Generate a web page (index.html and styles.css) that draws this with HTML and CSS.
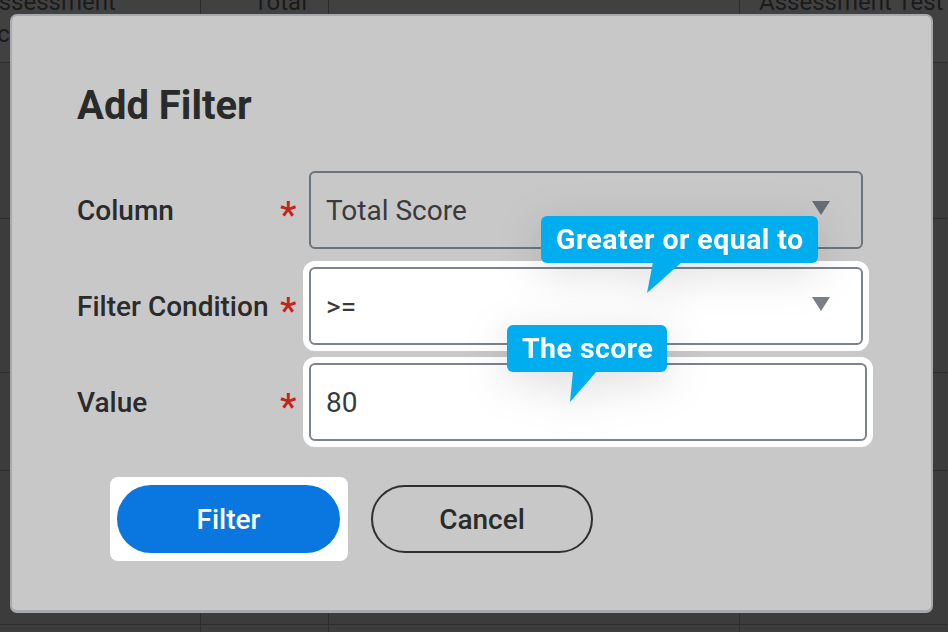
FILE: index.html
```html
<!DOCTYPE html>
<html lang="en">
<head>
<meta charset="utf-8">
<title>Add Filter</title>
<link rel="stylesheet" href="styles.css">
</head>
<body>
<div class="table">
  <div class="row head">
    <div class="cell c1"><span class="cut">Assessment Score</span></div>
    <div class="cell c2">Total</div>
    <div class="cell c3"></div>
    <div class="cell c4">Assessment Test</div>
  </div>
  <div class="row r1"><div class="cell"></div><div class="cell"></div><div class="cell"></div><div class="cell"></div></div>
  <div class="row r2"><div class="cell"></div><div class="cell"></div><div class="cell"></div><div class="cell"></div></div>
  <div class="row r3"><div class="cell"></div><div class="cell"></div><div class="cell"></div><div class="cell"></div></div>
  <div class="row r4"><div class="cell"></div><div class="cell"></div><div class="cell"></div><div class="cell"></div></div>
  <div class="row r5"><div class="cell"></div><div class="cell"></div><div class="cell"></div><div class="cell"></div></div>
</div>

<div class="dialog">
  <h1 class="title">Add Filter</h1>
  <div class="form">
    <div class="label">Column</div>
    <div class="req">*</div>
    <div class="field select narrow"><span class="val">Total Score</span><span class="caret"></span></div>

    <div class="label">Filter Condition</div>
    <div class="req">*</div>
    <div class="field select narrow lit"><span class="val">&gt;=</span><span class="caret"></span></div>

    <div class="label">Value</div>
    <div class="req">*</div>
    <div class="field lit"><span class="val">80</span></div>
  </div>
  <div class="actions">
    <div class="spot"><button class="btn primary">Filter</button></div>
    <button class="btn ghost">Cancel</button>
  </div>

  <div class="tip tip1">Greater or equal to</div>
  <div class="tip tip2">The score</div>
</div>
</body>
</html>
```
FILE: styles.css
```css
* { box-sizing: border-box; }
html, body { margin: 0; padding: 0; }
body {
  width: 948px;
  height: 632px;
  overflow: hidden;
  background: #3b3c3b;
  font-family: Roboto, "Liberation Sans", Arial, sans-serif;
  position: relative;
}

/* background table */
.table { margin-top: -14px; }
.row {
  display: grid;
  grid-template-columns: 201px 128px 411px 1fr;
  border-bottom: 1px solid #2c2d2c;
}
.row.head { height: 77px; background: #414141; }
.r1 { height: 156px; }
.r2 { height: 154px; }
.r3 { height: 98px; }
.r4 { height: 154px; }
.r5 { height: 8px; border-bottom: none; }
.cell {
  border-right: 1px solid #2c2d2c;
  font-size: 24px;
  line-height: 32px;
  color: #1b1b1b;
  overflow: hidden;
  white-space: nowrap;
}
.cell:last-child { border-right: none; }
.c1 { white-space: normal; }
.cut { display: block; margin-left: -17px; width: 160px; }
.c2 { text-align: right; padding-right: 21px; }
.c4 { padding-left: 19px; }

/* dialog */
.dialog {
  position: absolute;
  left: 10px;
  top: 14px;
  width: 923px;
  height: 599px;
  background: #c8c8c8;
  border: 2px solid #a6aaae;
  border-bottom-width: 3px;
  border-radius: 7px;
  padding: 66px 0 0 65px;
}
.title {
  margin: 0;
  font-size: 40px;
  line-height: 48px;
  font-weight: 700;
  color: #2a2a2a;
}
.form {
  margin-top: 41px;
  display: grid;
  grid-template-columns: 203px 29px 558px;
  grid-auto-rows: 78px;
  row-gap: 18px;
  align-items: center;
}
.label {
  font-size: 28px;
  font-weight: 500;
  color: #2b2b2b;
}
.req {
  color: #c1261e;
  font-size: 37px;
  font-weight: 500;
  line-height: 36px;
  height: 36px;
  align-self: center;
  margin-top: 10px;
}
.field {
  height: 78px;
  border: 2px solid #6b737b;
  border-radius: 6px;
  display: flex;
  align-items: center;
  padding: 0 31px 0 15px;
  font-size: 28px;
  color: #3a3a3a;
}
.field.narrow { width: 554px; }
.field.lit {
  background: #fff;
  border-color: #7c838a;
  box-shadow: 0 0 0 6px #fff;
}
.val { flex: 1; }
.caret {
  width: 0;
  height: 0;
  border-left: 9px solid transparent;
  border-right: 9px solid transparent;
  border-top: 14px solid #666d74;
  margin-top: -4px;
}
.lit .caret { border-top-color: #7a8188; }

.actions {
  margin-top: 36px;
  margin-left: 33px;
  display: flex;
  align-items: center;
}
.spot {
  background: #fff;
  border-radius: 8px;
  padding: 8px 8px 8px 7px;
}
.btn {
  width: 223px;
  height: 68px;
  border-radius: 34px;
  font-family: inherit;
  font-size: 28px;
  font-weight: 500;
  display: block;
  cursor: pointer;
}
.primary {
  background: #0a76e0;
  color: #fff;
  border: none;
}
.ghost {
  margin-left: 23px;
  width: 222px;
  background: transparent;
  border: 2px solid #2f2f2f;
  color: #2b2b2b;
}

/* tooltips */
.tip {
  position: absolute;
  background: #00aeef;
  color: #fff;
  font-size: 28.5px;
  letter-spacing: 0.45px;
  font-weight: 700;
  line-height: 47px;
  height: 47px;
  padding: 0 15px;
  border-radius: 6px;
  white-space: nowrap;
  filter: drop-shadow(0 10px 22px rgba(0, 0, 0, 0.13));
}
.tip::after {
  content: "";
  position: absolute;
  top: calc(100% - 1px);
  height: 31px;
  background: #00aeef;
}
.tip1 { left: 529px; top: 200px; width: 277px; }
.tip1::after {
  left: 106px;
  width: 36px;
  clip-path: polygon(6px 0, 35px 0, 0 100%);
}
.tip2 { left: 495px; top: 309px; width: 160px; }
.tip2::after {
  left: 63px;
  width: 28px;
  clip-path: polygon(3px 0, 27px 0, 0 100%);
}
```
